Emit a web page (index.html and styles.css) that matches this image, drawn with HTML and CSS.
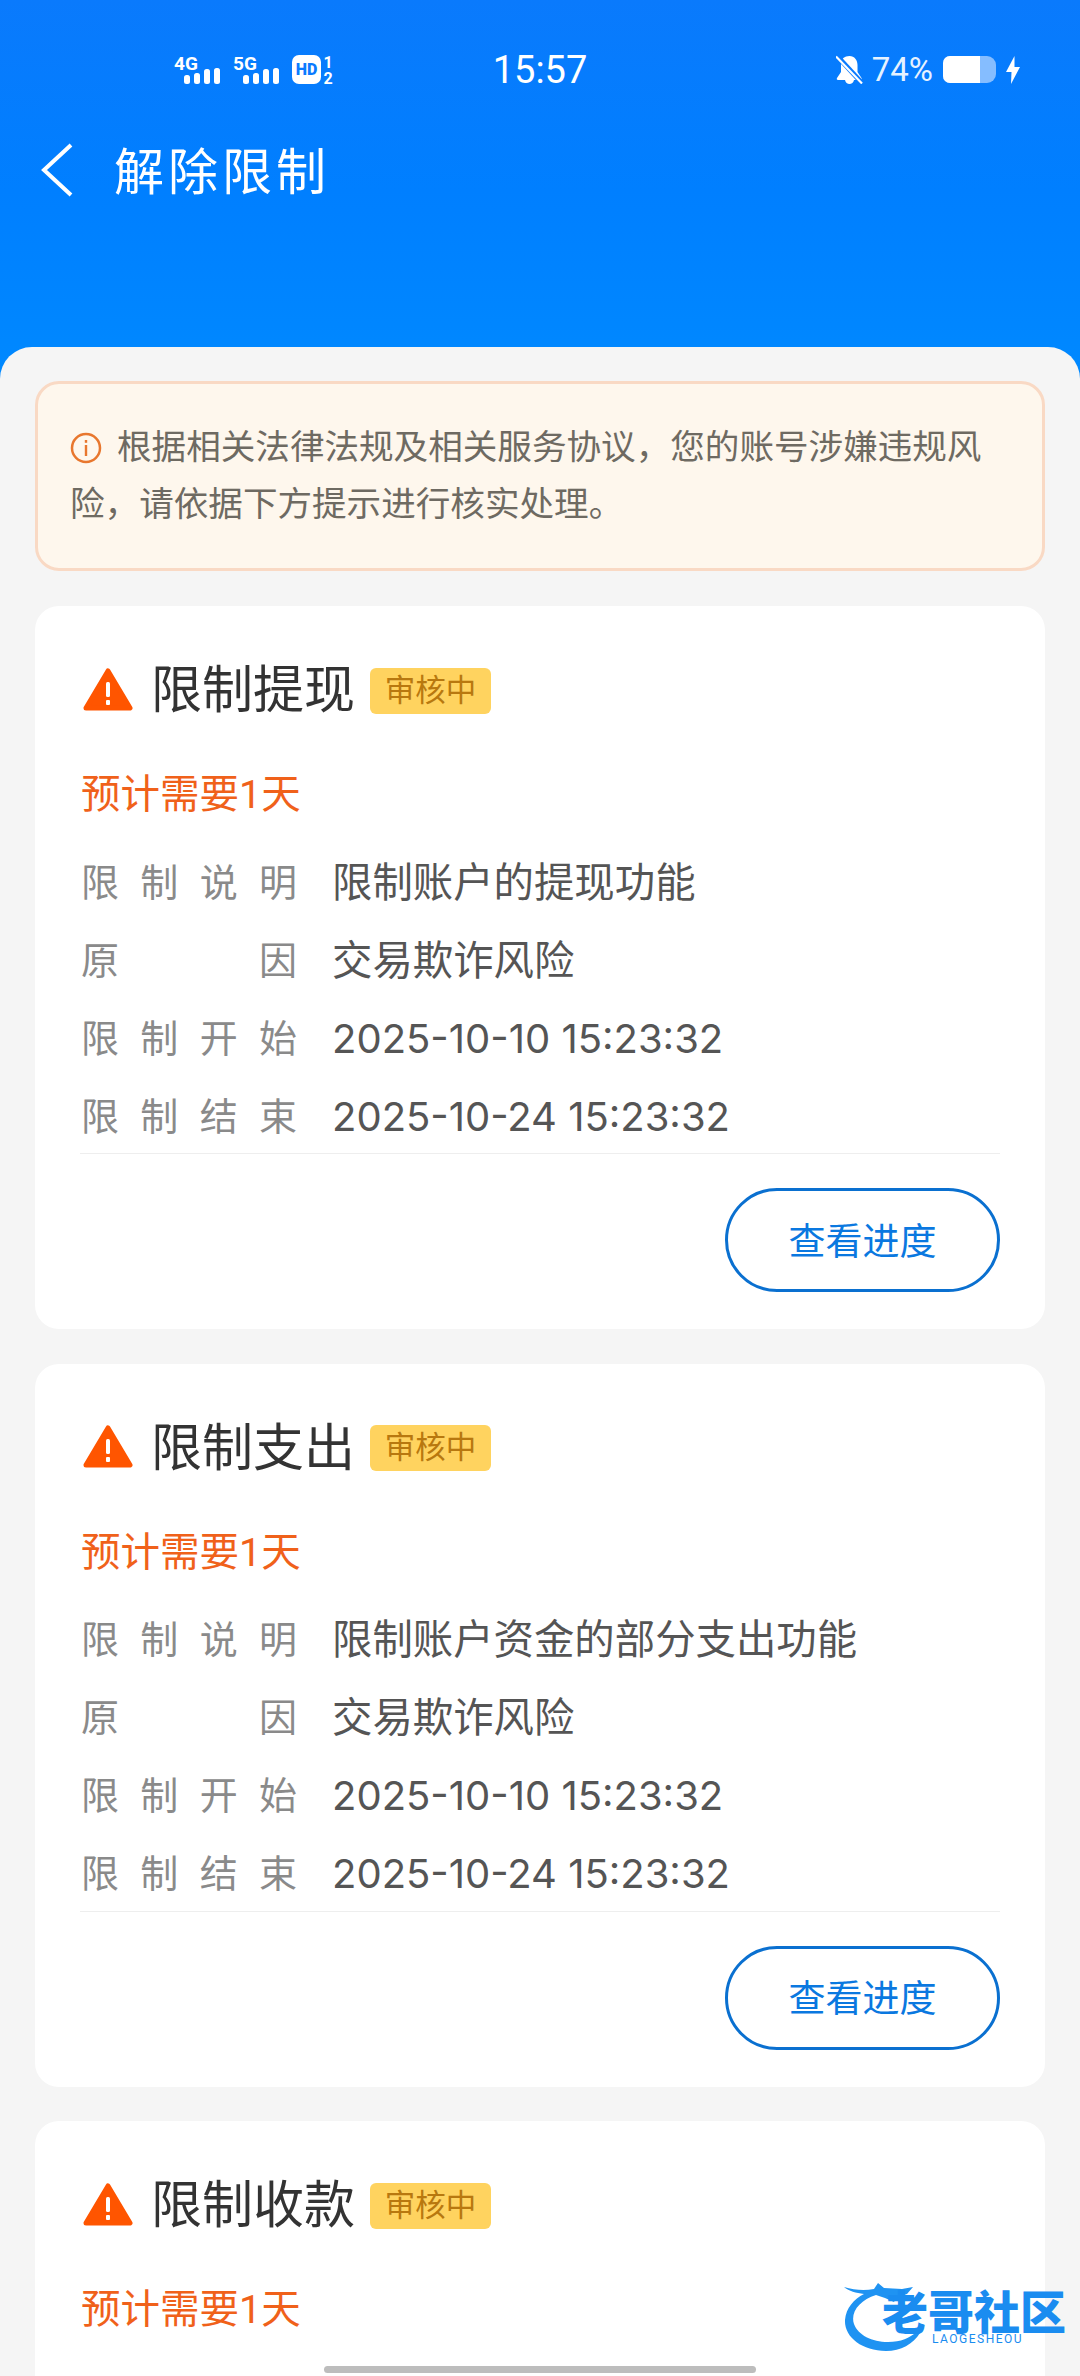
FILE: index.html
```html
<!DOCTYPE html>
<html lang="zh-CN">
<head>
    <meta charset="UTF-8">
    <meta name="viewport" content="width=device-width, initial-scale=1.0">
    <title>解除限制</title>
    <link rel="stylesheet" href="styles.css">
</head>
<body>
    <div class="phone">
        <header class="top">
            <div class="status-bar">
                <div class="status-left">
                    <svg class="signal" width="46" height="36" viewBox="0 0 46 36">
                        <text x="0" y="18" class="signal-text">4G</text>
                        <rect x="10" y="23" width="6" height="9" rx="2.5"/>
                        <rect x="20" y="21" width="6" height="11" rx="2.5"/>
                        <rect x="30" y="17" width="6" height="15" rx="2.5"/>
                        <rect x="40" y="16" width="6" height="16" rx="2.5"/>
                    </svg>
                    <svg class="signal" width="46" height="36" viewBox="0 0 46 36">
                        <text x="0" y="18" class="signal-text">5G</text>
                        <rect x="10" y="23" width="6" height="9" rx="2.5"/>
                        <rect x="20" y="21" width="6" height="11" rx="2.5"/>
                        <rect x="30" y="17" width="6" height="15" rx="2.5"/>
                        <rect x="40" y="16" width="6" height="16" rx="2.5"/>
                    </svg>
                    <svg class="signal hd" width="42" height="36" viewBox="0 0 42 36">
                        <rect x="0" y="3" width="29" height="29" rx="7"/>
                        <text x="14.500" y="23" text-anchor="middle" class="hd-text">HD</text>
                        <text x="36" y="16" text-anchor="middle" class="sim-text">1</text>
                        <text x="36" y="32" text-anchor="middle" class="sim-text">2</text>
                    </svg>
                </div>
                <div class="clock">15:57</div>
                <div class="status-right">
                    <svg width="27" height="29" viewBox="0 0 27 29">
                        <path d="M13.500 1c5 0 8 4 8 9v7l4 6c.6 1 0 2-1 2H18c-.5 2.500-2.400 4-4.500 4S9.500 27.500 9 25H2c-1 0-1.600-1-1-2l4-6V8.500C5 4 8.500 1 13.500 1z" fill="#fff"/>
                        <path d="M1 1l25 27" stroke="#0a7bff" stroke-width="5"/>
                        <path d="M0 1.500l26 27" stroke="#fff" stroke-width="2.200"/>
                    </svg>
                    <span class="battery-num">74%</span>
                    <div class="battery">
                        <div class="battery-level"></div>
                    </div>
                    <svg width="14" height="28" viewBox="0 0 14 28">
                        <path d="M8.500 0L0 16h5.500L5 28l9-17H8.500z" fill="#fff"/>
                    </svg>
                </div>
            </div>
            <div class="nav">
                <svg class="back" width="34" height="56" viewBox="0 0 34 56">
                    <path d="M31 3L4 28l27 25" fill="none" stroke="#fff" stroke-width="4"/>
                </svg>
                <h1>解除限制</h1>
            </div>
        </header>

        <main class="sheet">
            <div class="notice">
                <svg class="notice-icon" width="32" height="32" viewBox="0 0 32 32">
                    <circle cx="16" cy="16" r="14" fill="none" stroke="#e8772e" stroke-width="2.500"/>
                    <rect x="14.800" y="13" width="2.400" height="11" fill="#e8772e"/>
                    <rect x="14.800" y="8" width="2.400" height="2.800" fill="#e8772e"/>
                </svg>根据相关法律法规及相关服务协议，您的账号涉嫌违规风险，请依据下方提示进行核实处理。
            </div>

            <section class="card">
                <div class="card-title">
                    <svg class="warn" width="50" height="44" viewBox="0 0 50 44">
                        <path d="M25 3L47 40H3z" fill="#ff5500" stroke="#ff5500" stroke-width="5" stroke-linejoin="round"/>
                        <rect x="23" y="14" width="4" height="15" rx="1.500" fill="#fff"/>
                        <rect x="23" y="32" width="4" height="5" rx="1" fill="#fff"/>
                    </svg>
                    <h2>限制提现</h2>
                    <span class="tag">审核中</span>
                </div>
                <div class="estimate">预计需要1天</div>
                <div class="rows">
                    <div class="row"><span class="row-label">限制说明</span><span class="row-value">限制账户的提现功能</span></div>
                    <div class="row"><span class="row-label">原因</span><span class="row-value">交易欺诈风险</span></div>
                    <div class="row"><span class="row-label">限制开始</span><span class="row-date">2025-10-10 15:23:32</span></div>
                    <div class="row"><span class="row-label">限制结束</span><span class="row-date">2025-10-24 15:23:32</span></div>
                </div>
                <div class="card-foot">
                    <button class="progress-btn">查看进度</button>
                </div>
            </section>

            <section class="card">
                <div class="card-title">
                    <svg class="warn" width="50" height="44" viewBox="0 0 50 44">
                        <path d="M25 3L47 40H3z" fill="#ff5500" stroke="#ff5500" stroke-width="5" stroke-linejoin="round"/>
                        <rect x="23" y="14" width="4" height="15" rx="1.500" fill="#fff"/>
                        <rect x="23" y="32" width="4" height="5" rx="1" fill="#fff"/>
                    </svg>
                    <h2>限制支出</h2>
                    <span class="tag">审核中</span>
                </div>
                <div class="estimate">预计需要1天</div>
                <div class="rows">
                    <div class="row"><span class="row-label">限制说明</span><span class="row-value">限制账户资金的部分支出功能</span></div>
                    <div class="row"><span class="row-label">原因</span><span class="row-value">交易欺诈风险</span></div>
                    <div class="row"><span class="row-label">限制开始</span><span class="row-date">2025-10-10 15:23:32</span></div>
                    <div class="row"><span class="row-label">限制结束</span><span class="row-date">2025-10-24 15:23:32</span></div>
                </div>
                <div class="card-foot">
                    <button class="progress-btn">查看进度</button>
                </div>
            </section>

            <section class="card">
                <div class="card-title">
                    <svg class="warn" width="50" height="44" viewBox="0 0 50 44">
                        <path d="M25 3L47 40H3z" fill="#ff5500" stroke="#ff5500" stroke-width="5" stroke-linejoin="round"/>
                        <rect x="23" y="14" width="4" height="15" rx="1.500" fill="#fff"/>
                        <rect x="23" y="32" width="4" height="5" rx="1" fill="#fff"/>
                    </svg>
                    <h2>限制收款</h2>
                    <span class="tag">审核中</span>
                </div>
                <div class="estimate">预计需要1天</div>
            </section>
        </main>

        <!-- watermark sits over the page -->
        <div class="watermark">
            <svg class="watermark-logo" width="100" height="70" viewBox="0 0 100 70">
                <path d="M2 5c10 3 20 4 30 2l4-6 6 5 18 1 11-2-6 7-10 3-3 5-9-4-9-3C18 18 8 30 12 42c4 11 18 18 34 18 13 0 22-4 28-10l4 1c-7 11-19 18-34 18C20 69 2 55 3 38 4 26 12 17 22 12 14 11 7 9 2 5z"/>
            </svg>
            <div class="watermark-name">老哥社区</div>
            <div class="watermark-sub">LAOGESHEOU</div>
        </div>
        <div class="home-bar"></div>
    </div>
</body>
</html>
```

FILE: styles.css
```css
* {
    margin: 0;
    padding: 0;
    box-sizing: border-box;
}

body {
    font-family: Roboto, 'Noto Sans CJK SC', sans-serif;
    background: #f5f5f5;
}

.phone {
    width: 1080px;
    height: 2376px;
    overflow: hidden;
    position: relative;
}

.top {
    height: 380px;
    background: linear-gradient(180deg, #0a7afc 0%, #007fff 50%, #0089ff 100%);
    color: #fff;
    padding-top: 50px;
}

.status-bar {
    display: grid;
    grid-template-columns: 1fr auto 1fr;
    align-items: center;
    height: 36px;
    padding: 0 60px;
}

.status-left {
    display: flex;
    align-items: center;
    gap: 13px;
    margin-left: 114px;
}

.signal {
    fill: #fff;
}

.signal-text {
    font-size: 19px;
    font-weight: 700;
}

.hd-text {
    font-size: 16px;
    font-weight: 900;
    fill: #0a7bff;
}

.sim-text {
    font-size: 16px;
    font-weight: 700;
}

.clock {
    font-size: 38px;
    line-height: 36px;
}

.status-right {
    display: flex;
    align-items: center;
    justify-content: flex-end;
}

.battery-num {
    font-size: 33px;
    margin-left: 9px;
    color: #e6f2ff;
}

.battery {
    width: 53px;
    height: 27px;
    margin: 0 10px 0 10px;
    border-radius: 7px 9px 9px 7px;
    background: #85bdff;
    overflow: hidden;
}

.battery-level {
    width: 37px;
    height: 100%;
    background: #fff;
}

.nav {
    display: flex;
    align-items: center;
    height: 60px;
    margin-top: 52px;
    padding-left: 40px;
}

.back {
    margin-top: 3px;
}

.nav h1 {
    font-size: 50px;
    font-weight: 400;
    letter-spacing: 4px;
    margin-left: 40px;
}

.sheet {
    margin-top: -33px;
    position: relative;
    background: #f5f5f5;
    border-radius: 32px 32px 0 0;
    padding: 34px 35px 0;
}

.notice {
    height: 190px;
    padding: 35px 32px;
    background: #fef7ed;
    border: 3px solid #f9d9c4;
    border-radius: 24px;
    color: #6e6a62;
    font-size: 34.600px;
    line-height: 57px;
}

.notice-icon {
    vertical-align: -5px;
    margin-right: 15px;
}

.card {
    height: 723px;
    margin-top: 35px;
    padding: 52px 45px 37px;
    background: #fff;
    border-radius: 24px;
}

.card + .card {
    margin-top: 34.500px;
}

.card-title {
    display: flex;
    align-items: center;
    height: 60px;
}

.warn {
    margin: 3px 0 0 3px;
}

.card-title h2 {
    font-size: 51px;
    font-weight: 400;
    line-height: 60px;
    color: #333;
    margin: 6px 0 0 18px;
}

.tag {
    width: 121px;
    height: 46px;
    margin: 5px 0 0 15px;
    background: #ffd35f;
    border-radius: 6px;
    color: #b8780f;
    font-size: 30.500px;
    line-height: 45px;
    text-align: center;
}

.estimate {
    height: 60px;
    margin-top: 44px;
    padding-left: 1px;
    color: #f0611a;
    font-size: 39.500px;
    line-height: 66px;
}

.rows {
    display: flex;
    flex-direction: column;
    gap: 26px;
    margin-top: 34px;
    padding-bottom: 11px;
    border-bottom: 1px solid #eeeeee;
}

.row {
    display: flex;
    align-items: center;
    height: 52px;
    font-size: 40.400px;
}

.row-label {
    width: 216px;
    margin: 0 35px 6px 1px;
    color: #8a8a8a;
    font-size: 38px;
    text-align: justify;
    text-align-last: justify;
}

.row-value {
    margin-bottom: 6px;
    color: #555;
}

.row-date {
    font-family: Inter, Roboto, sans-serif;
    font-size: 40px;
    color: #555;
}

.card-foot {
    display: flex;
    justify-content: flex-end;
    margin-top: 34px;
}

.progress-btn {
    width: 275px;
    height: 104px;
    padding-bottom: 3px;
    background: #fff;
    border: 3px solid #0a70d0;
    border-radius: 52px;
    color: #0a78e0;
    font-family: inherit;
    font-size: 37px;
}

.watermark {
    position: absolute;
    left: 842px;
    top: 2282px;
    width: 224px;
    height: 70px;
    color: #1a8cf0;
}

.watermark-logo {
    fill: #1f93f2;
}

.watermark-name {
    position: absolute;
    left: 40px;
    top: 12px;
    font-size: 46px;
    line-height: 38px;
    font-weight: 900;
    white-space: nowrap;
}

.watermark-sub {
    position: absolute;
    left: 90px;
    top: 50px;
    font-size: 12px;
    line-height: 14px;
    letter-spacing: 1.500px;
    white-space: nowrap;
}

.home-bar {
    position: absolute;
    left: 324px;
    top: 2366px;
    width: 432px;
    height: 7px;
    border-radius: 4px;
    background: #bdbdbd;
}
```
